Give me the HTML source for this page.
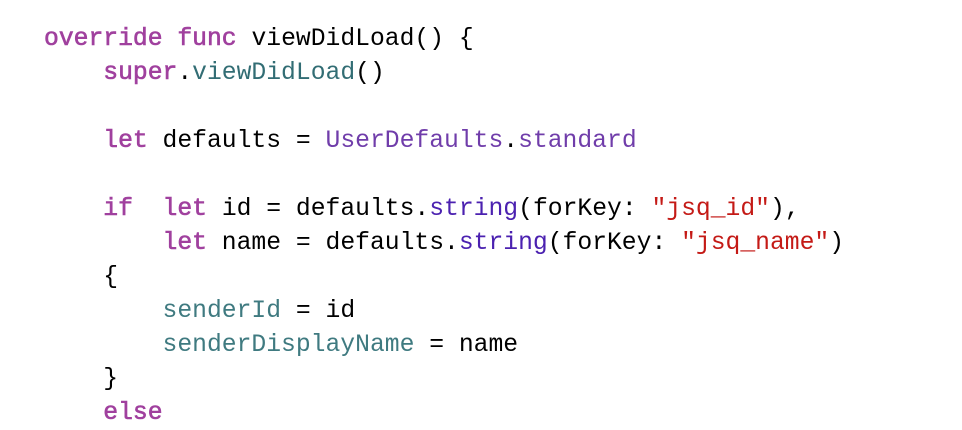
<!DOCTYPE html>
<html><head><meta charset="utf-8"><style>
html,body{margin:0;padding:0;background:#fff;width:962px;height:422px;overflow:hidden}
pre{margin:0;position:absolute;left:44px;top:22px;font-family:"Liberation Mono",monospace;font-size:24.7px;line-height:34px;color:#000}
.k{color:#a0409e;-webkit-text-stroke:0.6px #a0409e}
.m{color:#326d74}
.c{color:#703daa}
.f{color:#4b21b0}
.s{color:#c41a16}
.v{color:#3f7a80}
</style></head><body><pre><span class="k">override</span> <span class="k">func</span> viewDidLoad() {
    <span class="k">super</span>.<span class="m">viewDidLoad</span>()

    <span class="k">let</span> defaults = <span class="c">UserDefaults</span>.<span class="c">standard</span>

    <span class="k">if</span>  <span class="k">let</span> id = defaults.<span class="f">string</span>(forKey: <span class="s">"jsq_id"</span>),
        <span class="k">let</span> name = defaults.<span class="f">string</span>(forKey: <span class="s">"jsq_name"</span>)
    {
        <span class="v">senderId</span> = id
        <span class="v">senderDisplayName</span> = name
    }
    <span class="k">else</span></pre></body></html>
